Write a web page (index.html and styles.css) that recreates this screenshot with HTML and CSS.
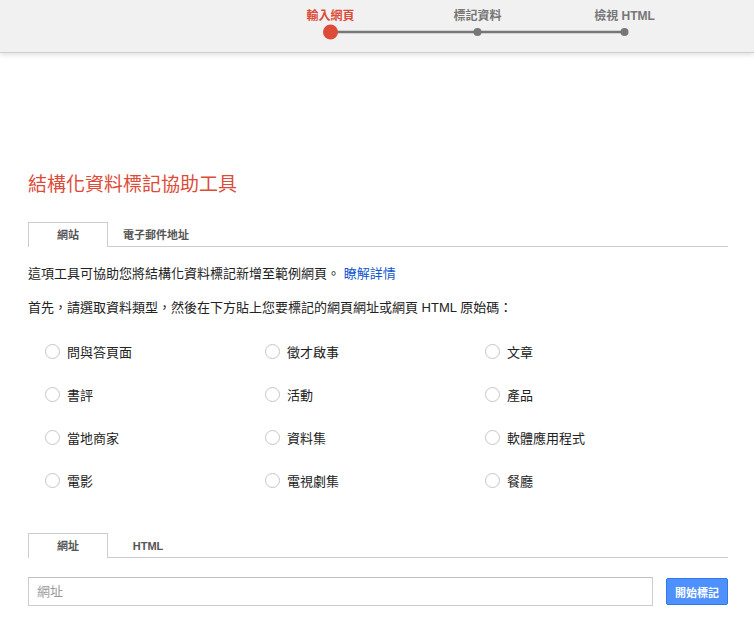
FILE: index.html
```html
<!DOCTYPE html>
<html lang="zh-Hant">
<head>
<meta charset="utf-8">
<title>結構化資料標記協助工具</title>
<link rel="stylesheet" href="styles.css">
</head>
<body>
<header class="topbar">
  <div class="stepper">
    <div class="step-labels">
      <span class="step-label active">輸入網頁</span>
      <span class="step-label">標記資料</span>
      <span class="step-label">檢視 HTML</span>
    </div>
    <svg class="step-track" width="441" height="16" viewBox="0 0 441 16">
      <line x1="73.5" y1="8" x2="367.5" y2="8" stroke="#777" stroke-width="2.5"/>
      <circle cx="73.5" cy="8" r="7.5" fill="#dd4b39"/>
      <circle cx="220.5" cy="8" r="4" fill="#777"/>
      <circle cx="367.5" cy="8" r="4" fill="#777"/>
    </svg>
  </div>
</header>

<main class="content">
  <h1 class="title">結構化資料標記協助工具</h1>

  <div class="tabs tabs-top">
    <span class="tab active">網站</span>
    <span class="tab">電子郵件地址</span>
  </div>

  <p class="para first">這項工具可協助您將結構化資料標記新增至範例網頁。 <a class="link" href="#">瞭解詳情</a></p>
  <p class="para">首先，請選取資料類型，然後在下方貼上您要標記的網頁網址或網頁 HTML 原始碼：</p>

  <div class="types">
    <label class="type"><span class="radio"></span>問與答頁面</label>
    <label class="type"><span class="radio"></span>徵才啟事</label>
    <label class="type"><span class="radio"></span>文章</label>
    <label class="type"><span class="radio"></span>書評</label>
    <label class="type"><span class="radio"></span>活動</label>
    <label class="type"><span class="radio"></span>產品</label>
    <label class="type"><span class="radio"></span>當地商家</label>
    <label class="type"><span class="radio"></span>資料集</label>
    <label class="type"><span class="radio"></span>軟體應用程式</label>
    <label class="type"><span class="radio"></span>電影</label>
    <label class="type"><span class="radio"></span>電視劇集</label>
    <label class="type"><span class="radio"></span>餐廳</label>
  </div>

  <div class="tabs tabs-bottom">
    <span class="tab active">網址</span>
    <span class="tab">HTML</span>
  </div>

  <div class="url-row">
    <input class="url-input" type="text" placeholder="網址">
    <button class="start-btn" type="button">開始標記</button>
  </div>
</main>
</body>
</html>
```

FILE: styles.css
```css
html, body {
  margin: 0;
  padding: 0;
  background: #fff;
}

body {
  font-family: "Liberation Sans", Arial, "Noto Sans CJK TC", sans-serif;
  color: #222;
}

.topbar {
  height: 53px;
  background: #f1f1f1;
  border-bottom: 1px solid #cfcfcf;
  box-shadow: 0 2px 5px rgba(0, 0, 0, 0.12);
  box-sizing: border-box;
}

.stepper {
  margin-left: 257px;
  width: 441px;
  padding-top: 9px;
}

.step-labels {
  display: grid;
  grid-template-columns: repeat(3, 147px);
  height: 14px;
}

.step-label {
  text-align: center;
  font-size: 12px;
  line-height: 14px;
  font-weight: bold;
  color: #777;
}

.step-label.active {
  color: #dd4b39;
}

.step-track {
  display: block;
  margin-top: 1px;
}

.content {
  width: 700px;
  margin-left: 28px;
}

.title {
  margin: 120px 0 0;
  font-size: 19px;
  line-height: 24px;
  font-weight: normal;
  color: #dd4b39;
}

.tabs {
  display: flex;
  border-bottom: 1px solid #cccccc;
  height: 24px;
}

.tabs-top {
  margin-top: 25px;
}

.tab {
  min-width: 80px;
  box-sizing: border-box;
  padding: 0 14px;
  text-align: center;
  font-size: 11px;
  line-height: 24px;
  font-weight: bold;
  color: #555;
  border: 1px solid transparent;
  border-bottom: none;
}

.tab.active {
  border-color: #cccccc;
  background: #fff;
  height: 25px;
  margin-bottom: -1px;
}

.para {
  margin: 16px 0 0;
  font-size: 13px;
  line-height: 18px;
  color: #222;
}

.para.first {
  margin-top: 18px;
}

.link {
  color: #1155cc;
  text-decoration: none;
}

.types {
  display: grid;
  grid-template-columns: repeat(3, 220px);
  grid-auto-rows: 43px;
  padding-left: 17px;
  margin-top: 13px;
}

.type {
  display: flex;
  align-items: center;
  font-size: 13px;
  color: #222;
}

.radio {
  width: 15px;
  height: 15px;
  box-sizing: border-box;
  border: 1px solid #c6c6c6;
  border-radius: 50%;
  background: #fff;
  margin-right: 7px;
  flex: none;
}

.tabs-bottom {
  margin-top: 31px;
}

.url-row {
  display: flex;
  align-items: center;
  margin-top: 19px;
  gap: 13px;
}

.url-input {
  width: 625px;
  height: 29px;
  box-sizing: border-box;
  border: 1px solid #cccccc;
  border-top-color: #c0c0c0;
  padding: 0 8px;
  font-family: "Liberation Sans", Arial, "Noto Sans CJK TC", sans-serif;
  font-size: 13px;
  color: #222;
  outline: none;
  margin: 0;
}

.url-input::placeholder {
  color: #999;
}

.start-btn {
  width: 62px;
  height: 27px;
  box-sizing: border-box;
  border: 1px solid #3079ed;
  border-radius: 2px;
  background: #4d90fe;
  color: #fff;
  font-family: "Liberation Sans", Arial, "Noto Sans CJK TC", sans-serif;
  font-size: 11px;
  font-weight: bold;
  padding: 0;
  margin: 0;
}
```
